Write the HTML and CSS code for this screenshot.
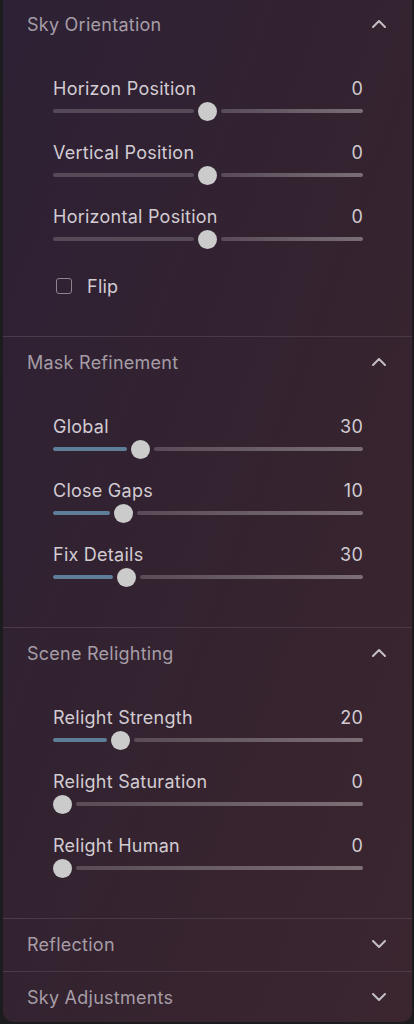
FILE: index.html
```html
<!DOCTYPE html>
<html lang="en">

<head>
	<meta charset="utf-8">
	<title>Sky Settings</title>
	<link rel="stylesheet" href="styles.css">
</head>

<body>
	<div class="panel">
		<section class="section">
			<div class="header">
				<span>Sky Orientation</span>
				<svg class="chevron" width="14" height="8" viewBox="0 0 14 8"><polyline points="1,7 7,1 13,7"/></svg>
			</div>
			<div class="body">
				<div class="row">
					<div class="label"><span>Horizon Position</span><span>0</span></div>
					<div class="slider">
						<div class="track" style="width: 141px"></div>
						<div class="thumb"></div>
						<div class="track rest"></div>
					</div>
				</div>
				<div class="row">
					<div class="label"><span>Vertical Position</span><span>0</span></div>
					<div class="slider">
						<div class="track" style="width: 141px"></div>
						<div class="thumb"></div>
						<div class="track rest"></div>
					</div>
				</div>
				<div class="row">
					<div class="label"><span>Horizontal Position</span><span>0</span></div>
					<div class="slider">
						<div class="track" style="width: 141px"></div>
						<div class="thumb"></div>
						<div class="track rest"></div>
					</div>
				</div>
				<label class="check">
					<span class="box"></span>
					<span>Flip</span>
				</label>
			</div>
		</section>

		<section class="section">
			<div class="header">
				<span>Mask Refinement</span>
				<svg class="chevron" width="14" height="8" viewBox="0 0 14 8"><polyline points="1,7 7,1 13,7"/></svg>
			</div>
			<div class="body">
				<div class="row">
					<div class="label"><span>Global</span><span>30</span></div>
					<div class="slider">
						<div class="track fill" style="width: 74px"></div>
						<div class="thumb"></div>
						<div class="track rest"></div>
					</div>
				</div>
				<div class="row">
					<div class="label"><span>Close Gaps</span><span>10</span></div>
					<div class="slider">
						<div class="track fill" style="width: 57px"></div>
						<div class="thumb"></div>
						<div class="track rest"></div>
					</div>
				</div>
				<div class="row">
					<div class="label"><span>Fix Details</span><span>30</span></div>
					<div class="slider">
						<div class="track fill" style="width: 60px"></div>
						<div class="thumb"></div>
						<div class="track rest"></div>
					</div>
				</div>
			</div>
		</section>

		<section class="section">
			<div class="header">
				<span>Scene Relighting</span>
				<svg class="chevron" width="14" height="8" viewBox="0 0 14 8"><polyline points="1,7 7,1 13,7"/></svg>
			</div>
			<div class="body">
				<div class="row">
					<div class="label"><span>Relight Strength</span><span>20</span></div>
					<div class="slider">
						<div class="track fill" style="width: 54px"></div>
						<div class="thumb"></div>
						<div class="track rest"></div>
					</div>
				</div>
				<div class="row">
					<div class="label"><span>Relight Saturation</span><span>0</span></div>
					<div class="slider start">
						<div class="thumb"></div>
						<div class="track rest"></div>
					</div>
				</div>
				<div class="row">
					<div class="label"><span>Relight Human</span><span>0</span></div>
					<div class="slider start">
						<div class="thumb"></div>
						<div class="track rest"></div>
					</div>
				</div>
			</div>
		</section>

		<section class="section">
			<div class="header">
				<span>Reflection</span>
				<svg class="chevron" width="14" height="8" viewBox="0 0 14 8"><polyline points="1,1 7,7 13,1"/></svg>
			</div>
		</section>

		<section class="section">
			<div class="header">
				<span>Sky Adjustments</span>
				<svg class="chevron" width="14" height="8" viewBox="0 0 14 8"><polyline points="1,1 7,7 13,1"/></svg>
			</div>
		</section>
	</div>
</body>

</html>
```

FILE: styles.css
```css
body {
	margin: 0;
	background-color: #1c1b1d;
	font-family: Inter, "Noto Sans", sans-serif;
	font-size: 18px;
	letter-spacing: 0.25px;
	color: #d2ccd2;
	height: 1024px;
	overflow: hidden;
}
.panel {
	margin: -1px 2px 0 3px;
	height: 1023px;
	border-radius: 0 0 10px 10px;
	background: linear-gradient(110deg, #2d2135 0%, #35232f 60%, #3b2630 100%);
	overflow: hidden;
}
.section {
	border-bottom: 1px solid #4a3946;
}
.section:last-child {
	border-bottom: none;
}
.header {
	height: 52px;
	padding: 0 26px 2px 24px;
	box-sizing: border-box;
	display: flex;
	align-items: center;
	justify-content: space-between;
	color: #a69da6;
}
.chevron {
	fill: none;
	stroke: #c4bec4;
	stroke-width: 2;
	stroke-linecap: round;
	stroke-linejoin: round;
}
.body {
	padding: 26.5px 49px 40.5px 50px;
	display: flex;
	flex-direction: column;
	gap: 21px;
}
.label {
	display: flex;
	justify-content: space-between;
	line-height: 21px;
	margin-bottom: 3px;
}
.slider {
	display: flex;
	align-items: center;
	height: 19px;
}
.track {
	height: 4px;
	border-radius: 2px;
	background-color: rgba(255, 255, 255, 0.19);
}
.track.fill {
	background-color: #5e7d98;
}
.track.rest {
	flex: 1;
	background: linear-gradient(90deg, rgba(255, 255, 255, 0.19), rgba(255, 255, 255, 0.34));
}
.thumb {
	width: 19px;
	height: 19px;
	margin: 0 4px;
	border-radius: 50%;
	background-color: #cbcbcb;
	flex-shrink: 0;
}
.slider.start .thumb {
	margin-left: 0;
}
.check {
	display: flex;
	align-items: center;
	gap: 15px;
	margin: 8px 0 1px;
	padding-left: 3px;
	line-height: 17px;
}
.box {
	width: 14px;
	height: 14px;
	border: 1.5px solid #8c838c;
	border-radius: 3px;
}
```
